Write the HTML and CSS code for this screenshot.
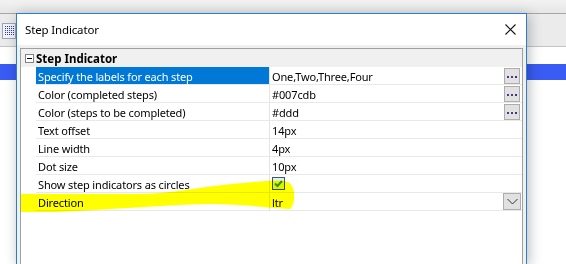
FILE: index.html
```html
<!DOCTYPE html>
<html>
<head>
<meta charset="utf-8">
<link rel="stylesheet" href="styles.css">
</head>
<body>
<div class="app">
  <div class="app-top"></div>
  <div class="app-toolbar">
    <svg class="grid-icon" width="14" height="16" viewBox="0 0 14 16">
      <rect x="0.5" y="0.5" width="13" height="15" fill="#f4f4f4" stroke="#9aa4c0"/>
      <g fill="#2c3fb8">
        <rect x="3" y="3" width="1" height="1"/><rect x="5" y="3" width="1" height="1"/><rect x="7" y="3" width="1" height="1"/><rect x="9" y="3" width="1" height="1"/><rect x="11" y="3" width="1" height="1"/>
        <rect x="3" y="5" width="1" height="1"/><rect x="5" y="5" width="1" height="1"/><rect x="7" y="5" width="1" height="1"/><rect x="9" y="5" width="1" height="1"/><rect x="11" y="5" width="1" height="1"/>
        <rect x="3" y="7" width="1" height="1"/><rect x="5" y="7" width="1" height="1"/><rect x="7" y="7" width="1" height="1"/><rect x="9" y="7" width="1" height="1"/><rect x="11" y="7" width="1" height="1"/>
        <rect x="3" y="9" width="1" height="1"/><rect x="5" y="9" width="1" height="1"/><rect x="7" y="9" width="1" height="1"/><rect x="9" y="9" width="1" height="1"/><rect x="11" y="9" width="1" height="1"/>
        <rect x="3" y="11" width="1" height="1"/><rect x="5" y="11" width="1" height="1"/><rect x="7" y="11" width="1" height="1"/><rect x="9" y="11" width="1" height="1"/><rect x="11" y="11" width="1" height="1"/>
      </g>
    </svg>
  </div>
  <div class="app-content">
    <div class="app-bar"></div>
  </div>
</div>

<div class="dialog">
  <div class="titlebar">
    <span class="title">Step Indicator</span>
    <svg class="close" width="11" height="11" viewBox="0 0 11 11">
      <path d="M0.5 0.5 L10.5 10.5 M10.5 0.5 L0.5 10.5" stroke="#111" stroke-width="1.1" fill="none"/>
    </svg>
  </div>
  <div class="dialog-body">
    <div class="propgrid">
      <div class="category">
        <span class="toggle"><span class="minus"></span></span>
        <span class="cat-label">Step Indicator</span>
      </div>

      <div class="row">
        <div class="gutter"></div>
        <div class="name selected">Specify the labels for each step</div>
        <div class="value">One,Two,Three,Four<span class="btn dots"><i></i><i></i><i></i></span></div>
      </div>
      <div class="row">
        <div class="gutter"></div>
        <div class="name">Color (completed steps)</div>
        <div class="value">#007cdb<span class="btn dots"><i></i><i></i><i></i></span></div>
      </div>
      <div class="row">
        <div class="gutter"></div>
        <div class="name">Color (steps to be completed)</div>
        <div class="value">#ddd<span class="btn dots"><i></i><i></i><i></i></span></div>
      </div>
      <div class="row">
        <div class="gutter"></div>
        <div class="name">Text offset</div>
        <div class="value">14px</div>
      </div>
      <div class="row">
        <div class="gutter"></div>
        <div class="name">Line width</div>
        <div class="value">4px</div>
      </div>
      <div class="row">
        <div class="gutter"></div>
        <div class="name">Dot size</div>
        <div class="value">10px</div>
      </div>
      <div class="row">
        <div class="gutter"></div>
        <div class="name">Show step indicators as circles</div>
        <div class="value">
          <span class="checkbox">
            <svg width="11" height="11" viewBox="0 0 11 11"><path d="M2 5.5 L4.5 8 L9 3" stroke="#1f9a2e" stroke-width="2" fill="none"/></svg>
          </span>
        </div>
      </div>
      <div class="row">
        <div class="gutter"></div>
        <div class="name">Direction</div>
        <div class="value">ltr<span class="btn drop"><svg width="11" height="7" viewBox="0 0 11 7"><path d="M0.5 1 L5.5 6 L10.5 1" stroke="#333" stroke-width="1" fill="none"/></svg></span></div>
      </div>
    </div>
  </div>
  <svg class="highlight" width="300" height="40" viewBox="0 0 300 40">
    <path d="M3,14 L120,14 C150,14 175,8 205,5 C235,2 260,-1 270,2 C278,6 278,24 272,29 C250,28 225,24 190,24 C140,25 90,30 40,32 L3,32 Z" fill="#ffff00"/>
  </svg>
</div>
</body>
</html>
```

FILE: styles.css
```css
* { box-sizing: border-box; }
html, body {
  margin: 0;
  padding: 0;
}
body {
  width: 566px;
  height: 264px;
  overflow: hidden;
  position: relative;
  font-family: "Noto Sans", "Open Sans", sans-serif;
  font-size: 11px;
  letter-spacing: -0.15px;
  color: #000;
  background: #fff;
}
.app {
  display: flex;
  flex-direction: column;
  height: 264px;
}
.app-top {
  height: 14px;
  background: linear-gradient(#f2f2f2, #e6e6e6);
  border-bottom: 1px solid #a6a6a6;
}
.app-toolbar {
  height: 33px;
  background: #ebebeb;
  border-bottom: 1px solid #c4c4c4;
  padding: 9px 0 0 2px;
}
.grid-icon { display: block; }
.app-content {
  flex: 1;
  background: #fff;
  padding-top: 17px;
}
.app-bar {
  height: 16px;
  background: #3a5cf4;
}

.dialog {
  position: absolute;
  left: 16px;
  top: 13px;
  width: 511px;
  height: 251px;
  background: #f0f0f0;
  border: 1px solid #2a7fcb;
  border-bottom: none;
  box-shadow: 2px 2px 12px rgba(0,0,0,0.28);
  display: flex;
  flex-direction: column;
}
.titlebar {
  height: 31px;
  background: #fff;
  display: flex;
  align-items: center;
  justify-content: space-between;
  padding: 0 10px 0 8px;
  flex: none;
}
.title {
  font-size: 11.5px;
  color: #000;
  padding-bottom: 1px;
}
.close { display: block; }
.dialog-body {
  flex: 1;
  padding: 3px 3px 0 3px;
  min-height: 0;
}
.propgrid {
  border: 1px solid #a0a0a0;
  border-bottom: none;
  background: #fff;
  height: 100%;
}
.category {
  height: 18px;
  background: #f0f0f0;
  display: flex;
  align-items: center;
}
.toggle {
  width: 15px;
  display: flex;
  justify-content: center;
  padding-left: 1px;
}
.minus {
  width: 9px;
  height: 9px;
  border: 1px solid #848484;
  background: #fff;
  position: relative;
  display: block;
}
.minus::after {
  content: "";
  position: absolute;
  left: 1px;
  top: 3px;
  width: 5px;
  height: 1px;
  background: #000;
}
.cat-label {
  font-weight: bold;
  font-size: 11.5px;
  letter-spacing: 0;
}
.row {
  display: grid;
  grid-template-columns: 15px 234px 1fr;
  height: 18px;
}
.gutter { background: #fff; }
.name, .value {
  border-bottom: 1px solid #e9e9e9;
  line-height: 17px;
  padding-top: 1px;
  white-space: nowrap;
  overflow: hidden;
}
.name {
  padding-left: 2px;
  border-right: 1px solid #e4e4e4;
}
.name.selected {
  background: #0078d7;
  color: #fff;
}
.value {
  padding-left: 2px;
  position: relative;
}
.btn {
  position: absolute;
  right: 2px;
  top: 1px;
  width: 16px;
  height: 16px;
  background: #e1e1e1;
  border: 1px solid #adadad;
  display: flex;
  align-items: center;
  justify-content: center;
  gap: 2px;
  padding-top: 2px;
}
.dots i {
  width: 2px;
  height: 2px;
  background: #2a2a5a;
  display: block;
}
.dots i:nth-child(1) { background: #3a3ab0; }
.dots i:nth-child(2) { background: #7a2a5a; }
.dots i:nth-child(3) { background: #2a3a90; }
.btn.drop {
  top: 0;
  right: 1px;
  width: 18px;
  height: 17px;
  padding-top: 0;
}
.btn.drop svg { display: block; }
.checkbox {
  display: inline-flex;
  width: 13px;
  height: 13px;
  border: 1px solid #2d5b8a;
  background: #e8ece8;
  margin-top: 1px;
  vertical-align: top;
  align-items: center;
  justify-content: center;
}
.checkbox svg { display: block; }
.highlight {
  position: absolute;
  left: 1px;
  top: 166px;
  mix-blend-mode: multiply;
  pointer-events: none;
}
```
